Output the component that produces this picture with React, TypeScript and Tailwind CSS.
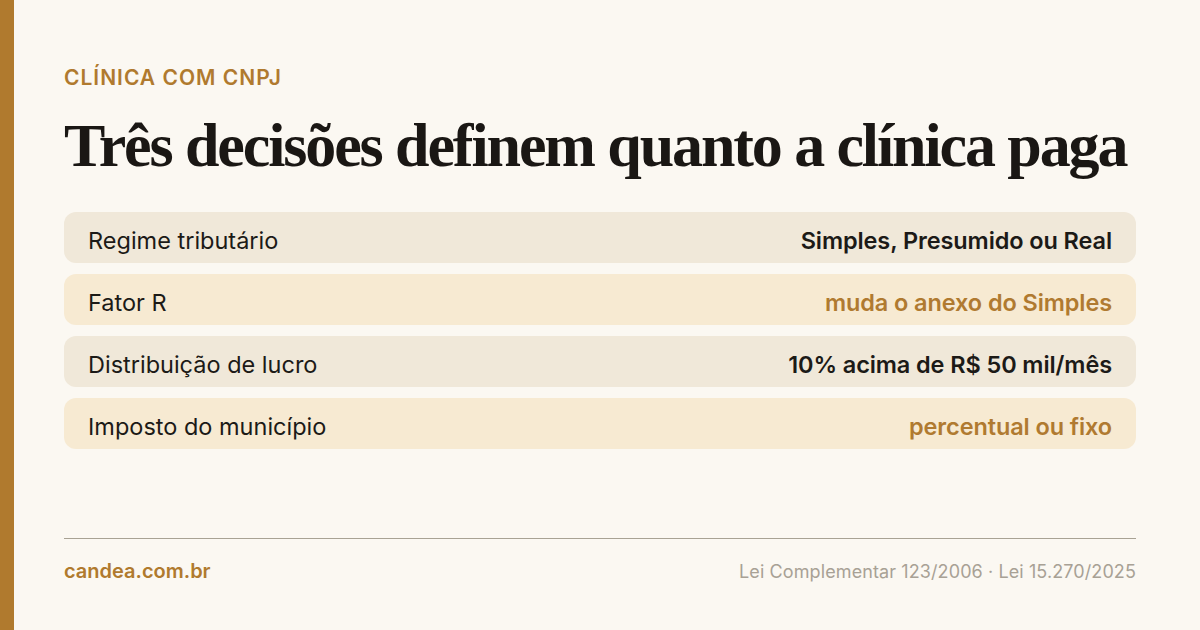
import React from "react";

const rows = [
  { label: "Regime tributário", value: "Simples, Presumido ou Real", accent: false },
  { label: "Fator R", value: "muda o anexo do Simples", accent: true },
  { label: "Distribuição de lucro", value: "10% acima de R$ 50 mil/mês", accent: false },
  { label: "Imposto do município", value: "percentual ou fixo", accent: true },
];

export default function App() {
  return (
    <div className="flex h-[630px] w-[1200px] bg-[#fbf8f2]" style={{ fontFamily: "Inter, Roboto, 'Noto Sans', sans-serif" }}>
      <div className="h-full w-[14px] shrink-0 bg-[#b07a2e]" />
      <div className="flex flex-1 flex-col pl-[50px] pr-[64px]">
        <div className="mt-[64px] text-[21px] font-semibold leading-[28px] tracking-[1px] text-[#b07a2e]">
          CLÍNICA COM CNPJ
        </div>
        <h1
          className="mt-[17px] h-[72px] whitespace-nowrap text-[62px] font-bold leading-[72px] tracking-[-2.1px] text-[#1a1714]"
          style={{ fontFamily: "'Liberation Serif', 'DejaVu Serif', serif" }}
        >
          Três decisões definem quanto a clínica paga
        </h1>
        <div className="mt-[31px] flex flex-col gap-[11px]">
          {rows.map((r) => (
            <div
              key={r.label}
              className={`flex h-[51px] items-center justify-between rounded-[12px] px-[24px] pt-[7px] text-[23.5px] ${
                r.accent ? "bg-[#f7ead2]" : "bg-[#f0e8d9]"
              }`}
            >
              <span className="text-[#1c1a17]">{r.label}</span>
              <span className={`font-semibold tracking-[-0.1px] ${r.accent ? "text-[#b07a30]" : "text-[#1c1a17]"}`}>{r.value}</span>
            </div>
          ))}
        </div>
        <div className="mt-[89px] h-px bg-[#a8a294]" />
        <div className="mt-[17px] flex items-center justify-between">
          <span className="text-[20px] font-semibold text-[#b07a2e]">candea.com.br</span>
          <span className="text-[18px] tracking-[0.1px] text-[#a8a195]">Lei Complementar 123/2006 · Lei 15.270/2025</span>
        </div>
      </div>
    </div>
  );
}
